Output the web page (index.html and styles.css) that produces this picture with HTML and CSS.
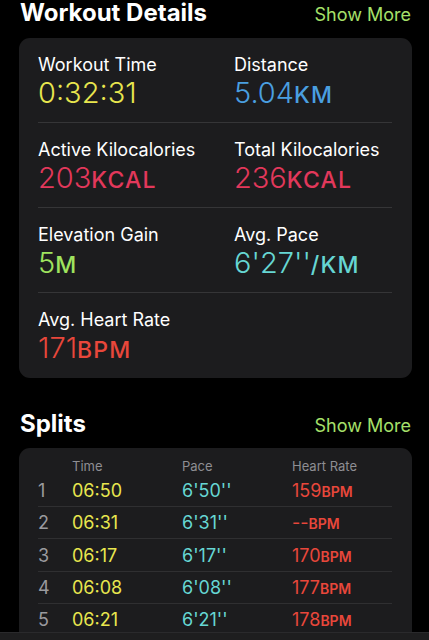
FILE: index.html
```html
<!doctype html>
<html>
<head>
	<title>Workout Details</title>
	<meta charset="utf-8"/>
	<link rel="stylesheet" href="styles.css">
</head>
<body>
	<div class="head first">
		<h1 class="title">Workout Details</h1>
		<span class="more">Show More</span>
	</div>

	<div class="card details">
		<div class="stat">
			<div class="label">Workout Time</div>
			<div class="value yellow">0:32:31</div>
		</div>
		<div class="stat">
			<div class="label">Distance</div>
			<div class="value blue">5.04<span class="unit">KM</span></div>
		</div>
		<div class="stat">
			<div class="label">Active Kilocalories</div>
			<div class="value pink">203<span class="unit">KCAL</span></div>
		</div>
		<div class="stat">
			<div class="label">Total Kilocalories</div>
			<div class="value pink">236<span class="unit">KCAL</span></div>
		</div>
		<div class="stat">
			<div class="label">Elevation Gain</div>
			<div class="value green">5<span class="unit">M</span></div>
		</div>
		<div class="stat">
			<div class="label">Avg. Pace</div>
			<div class="value cyan">6'27''<span class="unit">/KM</span></div>
		</div>
		<div class="stat last">
			<div class="label">Avg. Heart Rate</div>
			<div class="value red">171<span class="unit">BPM</span></div>
		</div>
		<div class="stat last"></div>
	</div>

	<div class="head">
		<h1 class="title">Splits</h1>
		<span class="more">Show More</span>
	</div>

	<div class="card splits">
		<div class="split-head">
			<span></span>
			<span>Time</span>
			<span>Pace</span>
			<span>Heart Rate</span>
		</div>
		<div class="split">
			<span class="num">1</span>
			<span class="yellow">06:50</span>
			<span class="cyan">6'50''</span>
			<span class="red">159<span class="unit">BPM</span></span>
		</div>
		<div class="split">
			<span class="num">2</span>
			<span class="yellow">06:31</span>
			<span class="cyan">6'31''</span>
			<span class="red">--<span class="unit">BPM</span></span>
		</div>
		<div class="split">
			<span class="num">3</span>
			<span class="yellow">06:17</span>
			<span class="cyan">6'17''</span>
			<span class="red">170<span class="unit">BPM</span></span>
		</div>
		<div class="split">
			<span class="num">4</span>
			<span class="yellow">06:08</span>
			<span class="cyan">6'08''</span>
			<span class="red">177<span class="unit">BPM</span></span>
		</div>
		<div class="split">
			<span class="num">5</span>
			<span class="yellow">06:21</span>
			<span class="cyan">6'21''</span>
			<span class="red">178<span class="unit">BPM</span></span>
		</div>
	</div>

	<div class="tabbar"></div>
</body>
</html>
```

FILE: styles.css
```css
body{
	margin: 0;
	background-color: #000;
	color: #fff;
	font-family: Inter, "Noto Sans", sans-serif;
	overflow: hidden;
}
.head{
	display: flex;
	justify-content: space-between;
	align-items: baseline;
	padding: 0 18px 0 20px;
	margin-top: 33px;
}
.head.first{
	margin-top: 0;
}
.title{
	margin: 0;
	font-size: 24px;
	font-weight: 700;
	line-height: 26px;
}
.more{
	color: #a6e06a;
	font-size: 18px;
}
.card{
	margin: 11px 17px 0 19px;
	background-color: #1c1c1e;
	border-radius: 11px;
	padding: 0 20px 0 19px;
}
.details{
	display: grid;
	grid-template-columns: 196px 1fr;
	margin-top: 12px;
}
.stat{
	height: 85px;
	padding-top: 15px;
	box-sizing: border-box;
	border-bottom: 1px solid #353537;
}
.stat.last{
	border-bottom: none;
}
.label{
	font-size: 18px;
	line-height: 24px;
}
.value{
	font-size: 29px;
	line-height: 32px;
	font-weight: 300;
}
.value .unit{
	font-size: 23px;
	font-weight: 500;
	letter-spacing: 1.2px;
}
.yellow{ color: #e8e64e; }
.blue{ color: #4a9fe0; }
.pink{ color: #e2385b; }
.red{ color: #e8473b; }
.green{ color: #9fe35e; }
.cyan{ color: #66d6d3; }

.splits{
	padding-bottom: 20px;
}
.split-head, .split{
	display: grid;
	grid-template-columns: 34px 110px 110px 1fr;
	align-items: center;
}
.split-head{
	padding-top: 10px;
	line-height: 16px;
	color: #8e8e93;
	font-size: 13px;
}
.split{
	height: 31.4px;
	border-top: 1px solid #2f2f31;
	font-size: 18px;
}
.split-head + .split{
	height: 32px;
	border-top: none;
}
.num{
	color: #9a9a9e;
}
.split .unit{
	font-size: 14px;
	font-weight: 600;
}
.tabbar{
	position: fixed;
	left: 0;
	right: 0;
	bottom: 0;
	height: 7px;
	background-color: #1e1e1f;
	border-top: 1px solid #2a2a2c;
}
```
